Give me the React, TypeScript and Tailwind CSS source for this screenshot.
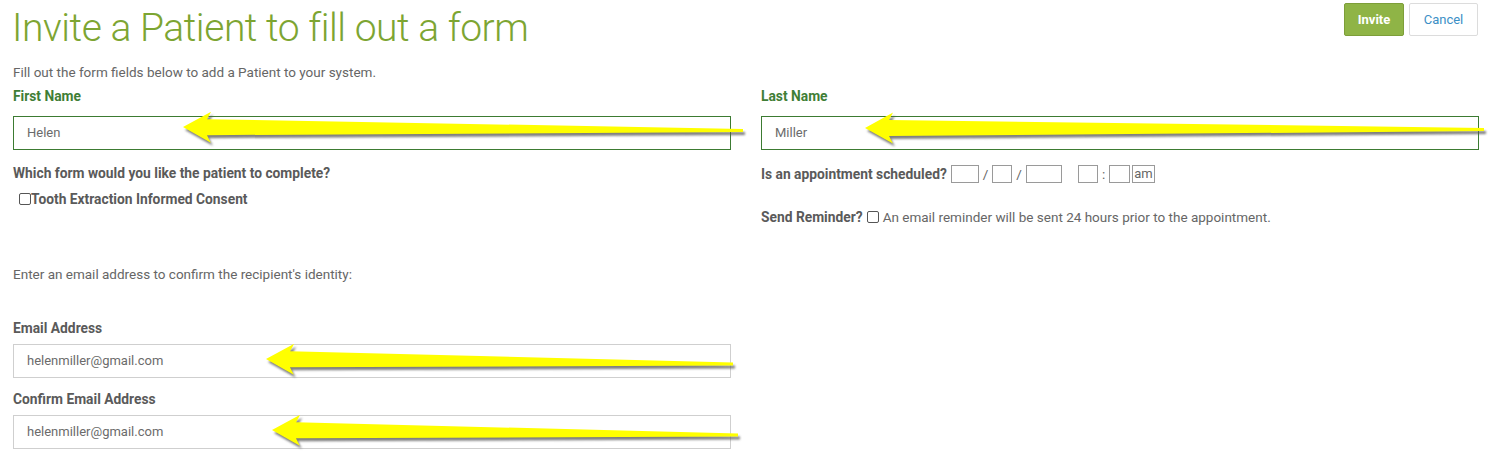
import React from "react";

type ArrowProps = { tx: number; ty: number; ex: number; ey: number };

function arrowPoints(a: ArrowProps, dx = 0, dy = 0) {
  const { tx, ty, ex, ey } = a;
  const hl = 28; // head length
  const hh = 15.5; // head half-height
  const s0 = 8; // shaft half thickness near head
  const s1 = 1.6; // at tail
  const len = Math.hypot(ex - tx, ey - ty);
  const ux = (ex - tx) / len;
  const uy = (ey - ty) / len;
  const nx = -uy;
  const ny = ux;
  const p = (d: number, o: number) => `${tx + ux * d + nx * o + dx},${ty + uy * d + ny * o + dy}`;
  return [
    p(0, 0),
    p(hl, -hh),
    p(hl - 4, -s0),
    p(len, -s1),
    p(len, s1),
    p(hl - 4, s0),
    p(hl, hh),
  ].join(" ");
}

function Arrows() {
  const arrows: ArrowProps[] = [
    { tx: 183, ty: 127, ex: 743, ey: 130.5 },
    { tx: 865, ty: 128, ex: 1484, ey: 129.5 },
    { tx: 266, ty: 359, ex: 733, ey: 364 },
    { tx: 272, ty: 430, ex: 738, ey: 435 },
  ];
  return (
    <svg
      className="pointer-events-none absolute left-0 top-0"
      width={1488}
      height={465}
      viewBox="0 0 1488 465"
    >
      <defs>
        <filter id="blur" x="-10%" y="-50%" width="120%" height="200%">
          <feGaussianBlur stdDeviation="1.3" />
        </filter>
      </defs>
      {arrows.map((a, i) => (
        <g key={i}>
          <polygon points={arrowPoints(a, 2, 3)} fill="#555" opacity={0.75} filter="url(#blur)" />
          <polygon points={arrowPoints(a)} fill="#ffff00" />
        </g>
      ))}
    </svg>
  );
}

function TextInput({ value, green }: { value: string; green?: boolean }) {
  return (
    <div
      className={
        "flex h-[34px] w-full items-center border pl-[13px] text-[13px] text-[#6b6b6b] " +
        (green ? "border-[#3c7b32]" : "border-[#cfcfcf]")
      }
    >
      {value}
    </div>
  );
}

function Box({ w }: { w: number }) {
  return <span className="inline-block h-[18px] border border-[#9a9a9a] bg-white" style={{ width: w }} />;
}

export default function App() {
  return (
    <div
      className="relative h-[465px] w-[1488px] overflow-hidden bg-white text-[13.5px] text-[#666]"
      style={{ fontFamily: "Roboto, 'Liberation Sans', sans-serif" }}
    >
      <div className="flex items-start justify-between">
        <h1 className="ml-[12px] mt-[3px] text-[39px] font-light leading-[50px] tracking-[-0.45px] text-[#7da532]">
          Invite a Patient to fill out a form
        </h1>
        <div className="mr-[10px] mt-[3px] flex gap-[5px]">
          <button className="h-[33px] w-[60px] rounded-[2px] border border-[#7d9e39] bg-[#8fb446] text-[13px] font-bold text-white">
            Invite
          </button>
          <button className="h-[33px] w-[69px] rounded-[2px] border border-[#dcdcdc] bg-white text-[13px] text-[#3b8fc6]">
            Cancel
          </button>
        </div>
      </div>

      <div className="ml-[13px] mt-[9px] leading-[20px]">Fill out the form fields below to add a Patient to your system.</div>

      <div className="mr-[9px] ml-[13px] mt-[4px] grid grid-cols-2 gap-[30px]">
        <div className="flex flex-col">
          <div className="text-[13.8px] font-bold leading-[20px] text-[#3f7e36]">First Name</div>
          <div className="mt-[10px]">
            <TextInput value="Helen" green />
          </div>
          <div className="mt-[13px] text-[13.8px] font-bold leading-[20px] text-[#5a5a5a]">
            Which form would you like the patient to complete?
          </div>
          <div className="mt-[6px] flex items-center pl-[6px] text-[13.8px] font-bold leading-[20px] text-[#5a5a5a]">
            <span className="inline-block h-[12px] w-[12px] rounded-[2px] border border-[#555] bg-white" />
            <span>Tooth Extraction Informed Consent</span>
          </div>
          <div className="mt-[55px] leading-[20px]">Enter an email address to confirm the recipient's identity:</div>
          <div className="mt-[34px] text-[13.8px] font-bold leading-[20px] text-[#5a5a5a]">Email Address</div>
          <div className="mt-[6px]">
            <TextInput value="helenmiller@gmail.com" />
          </div>
          <div className="mt-[11px] text-[13.8px] font-bold leading-[20px] text-[#5a5a5a]">Confirm Email Address</div>
          <div className="mt-[6px]">
            <TextInput value="helenmiller@gmail.com" />
          </div>
        </div>

        <div className="flex flex-col">
          <div className="text-[13.8px] font-bold leading-[20px] text-[#3f7e36]">Last Name</div>
          <div className="mt-[10px]">
            <TextInput value="Miller" green />
          </div>
          <div className="mt-[14px] flex h-[20px] items-center">
            <span className="mr-[4px] text-[13.8px] font-bold text-[#5a5a5a]">Is an appointment scheduled?</span>
            <Box w={28} />
            <span className="mx-[4px]">/</span>
            <Box w={20} />
            <span className="mx-[4px]">/</span>
            <Box w={36} />
            <span className="w-[16px]" />
            <Box w={20} />
            <span className="mx-[4px]">:</span>
            <Box w={21} />
            <span className="ml-[2px] inline-flex h-[18px] items-center border border-[#9a9a9a] px-[1px] text-[13px] text-[#666]">am</span>
          </div>
          <div className="mt-[23px] flex h-[20px] items-center">
            <span className="text-[13.8px] font-bold text-[#5a5a5a]">Send Reminder?</span>
            <span className="ml-[4px] mr-[4px] inline-block h-[12px] w-[12px] rounded-[2px] border border-[#555] bg-white" />
            <span>An email reminder will be sent 24 hours prior to the appointment.</span>
          </div>
        </div>
      </div>

      <Arrows />
    </div>
  );
}
